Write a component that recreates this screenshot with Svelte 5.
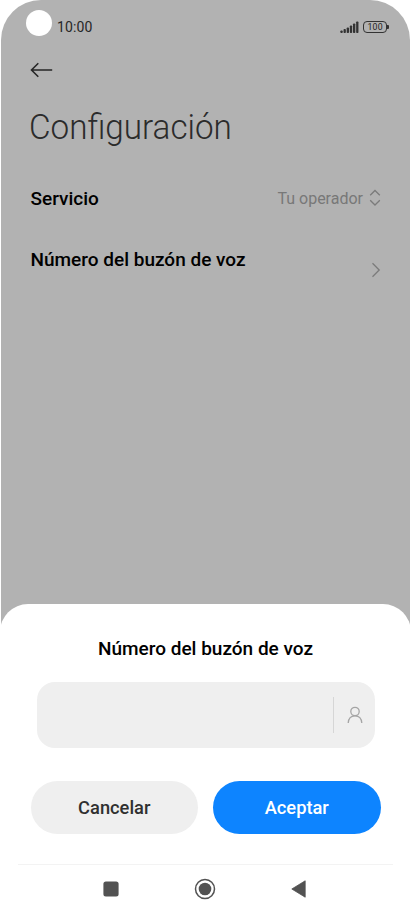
<script lang="ts">
  let operator: string = $state('Tu operador')
  let voicemail: string = $state('')

  const bars = [2.5, 4, 5.5, 7.5, 9.5, 11.5]
</script>

<div class="phone">
  <header class="status">
    <span class="camera"></span>
    <span class="time">10:00</span>
    <svg class="signal" width="19" height="12" viewBox="0 0 19 12">
      {#each bars as h, i}
        <rect x={0.4 + i * 3.15} y={12 - h} width="2.3" height={h} rx="0.8" fill="#333" />
      {/each}
    </svg>
    <span class="battery">100</span>
    <span class="tip"></span>
  </header>

  <main>
    <button class="back" aria-label="Atrás">
      <svg width="24" height="16" viewBox="0 0 24 16" fill="none" stroke="#262626" stroke-width="1.6">
        <path d="M8.3 1.2 1.5 8l6.8 6.8M1.5 8H22.2" />
      </svg>
    </button>

    <h1>Configuración</h1>

    <div class="row service">
      <span class="label">Servicio</span>
      <span class="value">{operator}</span>
      <svg width="12" height="18" viewBox="0 0 12 18" fill="none" stroke="#7b7b7b" stroke-width="1.3">
        <path d="M1.2 6.2 6 1.5l4.8 4.7M1.2 11.3 6 16l4.8-4.7" />
      </svg>
    </div>

    <div class="row number">
      <span class="label">Número del buzón de voz</span>
      <svg width="10" height="16" viewBox="0 0 10 16" fill="none" stroke="#7b7b7b" stroke-width="1.3">
        <path d="M1.5 1.3 8.2 8l-6.7 6.7" />
      </svg>
    </div>
  </main>

  <section class="sheet">
    <h2>Número del buzón de voz</h2>

    <div class="field">
      <input type="text" aria-label="Número del buzón de voz" bind:value={voicemail} />
      <span class="divider"></span>
      <svg width="16" height="18" viewBox="0 0 16 18" fill="none" stroke="#a5a5a5" stroke-width="1.3">
        <circle cx="8" cy="5.5" r="4.2" />
        <path d="M1.2 17c.3-4.3 3-7.1 6.8-7.1s6.5 2.8 6.8 7.1" />
      </svg>
    </div>

    <div class="actions">
      <button class="cancel">Cancelar</button>
      <button class="accept">Aceptar</button>
    </div>

    <nav>
      <svg width="16" height="16" viewBox="0 0 16 16">
        <rect x="0.4" y="0.4" width="15.2" height="15.2" rx="2.5" fill="#525252" />
      </svg>
      <svg width="22" height="22" viewBox="0 0 22 22">
        <circle cx="11" cy="11" r="9.5" fill="none" stroke="#525252" stroke-width="1.5" />
        <circle cx="11" cy="11" r="6.3" fill="#525252" />
      </svg>
      <svg width="16" height="18" viewBox="0 0 16 18">
        <path d="M.8 9 14.2.8v16.4z" fill="#525252" stroke="#525252" stroke-width="0.8" stroke-linejoin="round" />
      </svg>
    </nav>
  </section>
</div>

<style>
  :global(body) {
    background: #fff;
    overflow: hidden;
  }

  .phone {
    box-sizing: border-box;
    display: flex;
    flex-direction: column;
    height: 914px;
    margin: 0 1px;
    border-radius: 40px 40px 0 0;
    background: #b2b2b2;
    font-family: Roboto, sans-serif;
    overflow: hidden;
  }

  button {
    border: 0;
    padding: 0;
    background: none;
    font-family: inherit;
  }

  svg {
    display: block;
    flex: none;
  }

  .status {
    display: flex;
    align-items: center;
    height: 54px;
    padding: 0 21px 0 25px;
  }

  .camera {
    width: 26px;
    height: 26px;
    margin-bottom: 8px;
    border-radius: 50%;
    background: #fff;
  }

  .time {
    flex: 1;
    margin-left: 5px;
    font-size: 14px;
    letter-spacing: .1px;
    color: #262626;
  }

  .battery {
    box-sizing: border-box;
    width: 24px;
    height: 12px;
    margin-left: 4.5px;
    border: 1px solid #333;
    border-radius: 4px;
    font-size: 8.7px;
    line-height: 10px;
    letter-spacing: .2px;
    text-align: center;
    text-indent: .2px;
    color: #222;
  }

  .tip {
    width: 2px;
    height: 4px;
    border-radius: 0 1px 1px 0;
    background: #333;
  }

  main {
    flex: 1;
    padding: 0 29px 0 29.5px;
  }

  .back {
    display: block;
    margin: 8px 0 0 -.5px;
  }

  h1 {
    margin: 28px 0 0 -1.5px;
    font-size: 34.5px;
    font-weight: 300;
    line-height: 42px;
    color: #2b2b2b;
    /* slightly condensed, keeps the fi ligature */
    transform: scaleX(.963);
    transform-origin: left;
  }

  .row {
    display: flex;
    align-items: center;
  }

  .service {
    height: 30px;
    margin-top: 35px;
  }

  .number {
    height: 40px;
    margin-top: 37px;
  }

  .label {
    flex: 1;
    font-size: 19px;
    font-weight: 500;
    color: #000;
  }

  .number .label {
    align-self: flex-start;
    line-height: 19px;
  }

  .value {
    margin-right: 6px;
    font-size: 16px;
    color: #787878;
  }

  .sheet {
    box-sizing: border-box;
    height: 310px;
    margin: 0 -1px;
    padding-top: 34px;
    border-radius: 28px 28px 0 0;
    background: #fff;
  }

  h2 {
    margin: 0;
    font-size: 19px;
    font-weight: 500;
    line-height: 22px;
    text-align: center;
    color: #000;
  }

  .field {
    display: flex;
    align-items: center;
    height: 66px;
    margin: 22px 36.5px 0;
    padding-right: 11.5px;
    border-radius: 18px;
    background: #efefef;
  }

  input {
    flex: 1;
    min-width: 0;
    height: 40px;
    padding: 0 16px;
    border: 0;
    outline: 0;
    background: none;
    font: 18px Roboto, sans-serif;
  }

  .divider {
    width: 1px;
    height: 36px;
    margin-right: 13px;
    background: #d6d6d6;
  }

  .actions {
    display: flex;
    gap: 15px;
    margin: 33px 30.5px 0;
  }

  .actions button {
    flex: 1;
    height: 53px;
    border-radius: 27px;
    font-size: 18.3px;
    font-weight: 500;
  }

  .actions .cancel {
    background: #efefef;
    color: #303030;
  }

  .actions .accept {
    background: #0d84ff;
    color: #fff;
  }

  nav {
    display: flex;
    align-items: center;
    justify-content: space-between;
    height: 48px;
    margin: 30px 18px 0;
    padding: 0 86px 0 85px;
    border-top: 1px solid #f3f3f3;
  }
</style>
